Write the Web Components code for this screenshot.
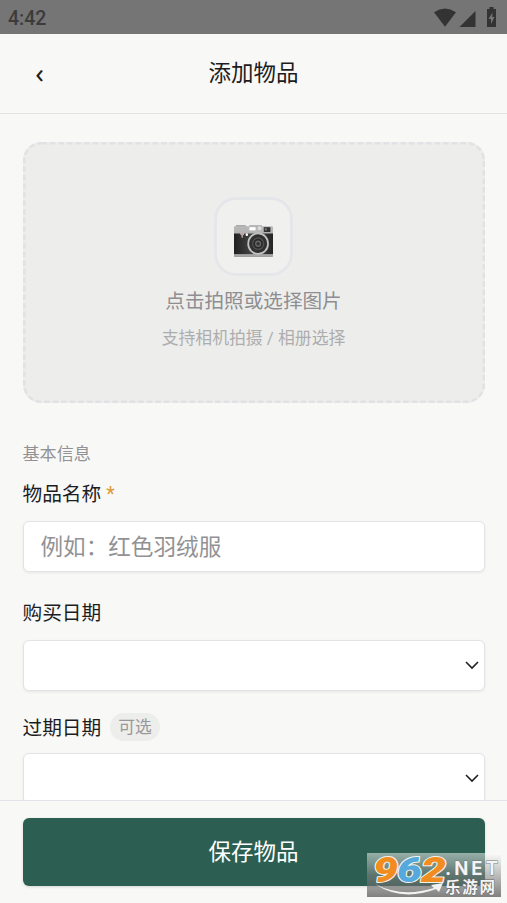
<!DOCTYPE html>
<html lang="zh-CN"><head><meta charset="utf-8"><title>添加物品</title>
<style>
html,body{margin:0;height:100%}
body{font-family:Roboto,"Noto Sans CJK SC",sans-serif;background:#f8f8f6;color:#1d1d1f;overflow:hidden}
</style></head><body>
<add-item-page></add-item-page>
<script>
const define=(name,html)=>customElements.define(name,class extends HTMLElement{
  constructor(){super();const t=document.createElement('template');t.innerHTML=html;
    this.attachShadow({mode:'open'}).append(t.content.cloneNode(true));}
});

define('status-bar',`<style>
:host{display:flex;height:34px;flex:none;box-sizing:border-box;background:#757575;color:#3b3b3b;justify-content:space-between;align-items:center;padding:2px 9px 0 8px;font:500 19.500px/32px Roboto,sans-serif}
span{padding-top:1px}
svg{display:block;width:66px;height:24px;margin-top:-3px}
</style><span>4:42</span>
<svg viewBox="0 0 66 24" fill="#333"><path d="M2 7.200Q13 -.2 24 7.200L13 21.800Z"/><path d="M43.500 6V22H27.500Z"/><path fill-rule="evenodd" d="M55 4h2.500V2H61.500v2H64v18H55zM60.500 7.500L56.500 14H59V19L62.500 12H60.200Z"/></svg>`);

define('top-bar',`<style>
:host{display:grid;flex:none;height:80px;box-sizing:border-box;grid-template-columns:79px 1fr 79px;align-items:center;border-bottom:1px solid #e1e2e3}
button{border:0;background:none;padding:0 0 4px;font:400 28px/30px "Noto Sans",sans-serif;color:#1d1d1f}
h1{margin:-1px 0 0;font-size:22.500px;line-height:32px;font-weight:400;text-align:center}
</style><button aria-label="返回">‹</button><h1><slot></slot></h1>`);

define('camera-icon',`<style>:host{display:block}svg{display:block}</style>
<svg width="39" height="33" viewBox="0 0 38 31" preserveAspectRatio="none">
<defs><linearGradient id="m" x2="0" y2="1"><stop stop-color="#b9b9b9"/><stop offset="1" stop-color="#9a9a9a"/></linearGradient><linearGradient id="b"><stop stop-color="#202020"/><stop offset=".5" stop-color="#494949"/><stop offset="1" stop-color="#252525"/></linearGradient></defs>
<path d="M1 4L2 1H11L13 3V9H1Z" fill="#aaa"/><rect y="2" width="38" height="29" rx="1" fill="url(#m)"/><path d="M0 9H38V28.500H0Z" fill="url(#b)"/><rect y="28.500" width="38" height="2" fill="#a7a7a7"/>
<path d="M13 7L15 1H27L29 7Z" fill="#b7b7b7"/><rect x="15" y="3" width="6" height="3" fill="#fff"/><circle cx="25" cy="4" r="1.800" fill="#ddd"/><rect x="29" y="3" width="6.500" height="4.500" fill="#333"/><path d="M30 4h2v2h-2z" fill="#777"/>
<circle cx="8" cy="9" r="2" fill="#bbb"/><path d="M8 8v5" stroke="#b99f96" stroke-width="1.500"/><circle cx="12.500" cy="10" r="1.200" fill="#fff"/>
<circle cx="23.500" cy="18.500" r="10.500" fill="#c2c2c2"/><circle cx="23.500" cy="18.500" r="8.800" fill="#303030"/><circle cx="23.500" cy="18.500" r="6" fill="#505050"/><circle cx="23.500" cy="18.500" r="4.700" fill="#292929"/><circle cx="23.500" cy="18.500" r="3" fill="#666"/><circle cx="23.500" cy="18.500" r="1.700" fill="#333"/></svg>`);

define('photo-picker',`<style>
:host{display:flex;position:relative;flex-direction:column;align-items:center;height:261px;box-sizing:border-box;padding-top:55px;border-radius:18px;background:#ededeb}
.edge{position:absolute;inset:0;width:100%;height:100%}
.tile{display:flex;align-items:center;justify-content:center;width:79px;height:79px;box-sizing:border-box;border:3px solid #e5e6ea;border-radius:22px;background:#f0f0ee}
camera-icon{margin-top:7px}
p{margin:12px 0 0;font-size:19.600px;line-height:28px;color:#8e8e92}
small{margin-top:10px;font-size:16.850px;line-height:24px;color:#adadb0}
</style><svg class="edge"><rect x="1.250" y="1.250" width="459.500" height="258.500" rx="17" fill="none" stroke="#e1e2e5" stroke-width="2.500" stroke-dasharray="5.700 2.850"/></svg>
<div class="tile"><camera-icon></camera-icon></div><p>点击拍照或选择图片</p><small>支持相机拍摄 / 相册选择</small>`);

define('field-label',`<style>
:host{display:flex;align-items:center;height:28px;font-size:19.700px;line-height:28px}
::slotted(b){font-weight:400;color:#e09a34;margin-left:5px}
::slotted(i){font-style:normal;font-size:16.800px;line-height:28px;height:28px;color:#98989b;background:#ededeb;border-radius:14px;padding:0 8px;margin:-4px 0 0 9px}
</style><slot></slot>`);

define('form-box',`<style>
:host{display:flex;align-items:center;justify-content:space-between;box-sizing:border-box;height:51px;border:1.500px solid #e2e3e6;border-radius:6px;background:#fff;box-shadow:0 1px 3px #00000012;padding:0 5px 0 17px;font-size:22.600px;line-height:32px;color:#929295}
span{padding-top:2px}
svg{display:none;margin:-1px 0 0 auto}:host([select]) svg{display:block}
</style><span><slot></slot></span><svg width="14" height="10" viewBox="0 0 14 10"><path d="M1 2L7 8L13 2" fill="none" stroke="#222" stroke-width="1.600"/></svg>`);

define('save-bar',`<style>
:host{display:block;flex:none;height:103px;box-sizing:border-box;border-top:1.500px solid #e1e3e8;padding:17px 22.500px 0;background:#f8f8f6}
button{display:block;width:100%;height:68px;border:0;border-radius:6px;background:#2c5f51;color:#fff;font:22.500px/32px Roboto,"Noto Sans CJK SC",sans-serif;box-shadow:0 1px 3px #0002}
</style><button><slot></slot></button>`);

define('site-badge',`<style>
:host{position:absolute;left:367px;top:853px;width:134px;height:44px;background:linear-gradient(#ffffff80,#88888888 50%,#555b)}
svg{display:block;overflow:visible}
</style><svg width="134" height="44" viewBox="0 0 134 44">
<g font-weight="700" paint-order="stroke" stroke-linejoin="round">
<g font-size="35" font-family="Roboto,sans-serif" font-weight="900" font-style="italic" stroke="#f3f3ee" stroke-width="2"><text x="6" y="28.500" textLength="25" lengthAdjust="spacingAndGlyphs" fill="#f18d20">9</text><text x="30" y="28.500" textLength="25" lengthAdjust="spacingAndGlyphs" fill="#55a9dd">6</text><text x="54" y="28.500" textLength="25" lengthAdjust="spacingAndGlyphs" fill="#f18d20">2</text></g>
<text x="78" y="22" font-size="18.500" font-family="Inter,sans-serif" textLength="53" lengthAdjust="spacing" fill="#f4f4f4" stroke="#777" stroke-width="1">.NET</text>
<text x="78" y="39.500" font-family="Noto Sans CJK SC" font-size="15.500" textLength="50" fill="#f4f4f4" stroke="#666" stroke-width="1">乐游网</text></g>
<path d="M8 31Q35 45 67 35L64 32L76 30L72 39L69 36Q35 49 8 31Z" fill="#f1f2f2"/></svg>`);

define('add-item-page',`<style>
:host{display:flex;position:relative;flex-direction:column;width:507px;height:903px}
main{flex:1;min-height:0;overflow:hidden;padding:28px 22.500px 0}
h2{margin:39px 0 0;font-size:17.100px;line-height:24px;font-weight:400;color:#929295}
.f1{margin-top:15px}.b1{margin-top:12px}.f2{margin-top:28px}.b2{margin-top:12px}.f3{margin-top:23.500px}.b3{margin-top:10.500px}
</style><status-bar></status-bar><top-bar>添加物品</top-bar>
<main><photo-picker></photo-picker><h2>基本信息</h2>
<field-label class="f1">物品名称<b>*</b></field-label><form-box class="b1">例如：红色羽绒服</form-box>
<field-label class="f2">购买日期</field-label><form-box class="b2" select></form-box>
<field-label class="f3">过期日期<i>可选</i></field-label><form-box class="b3" select></form-box></main>
<save-bar>保存物品</save-bar><site-badge></site-badge>`);
</script></body></html>
